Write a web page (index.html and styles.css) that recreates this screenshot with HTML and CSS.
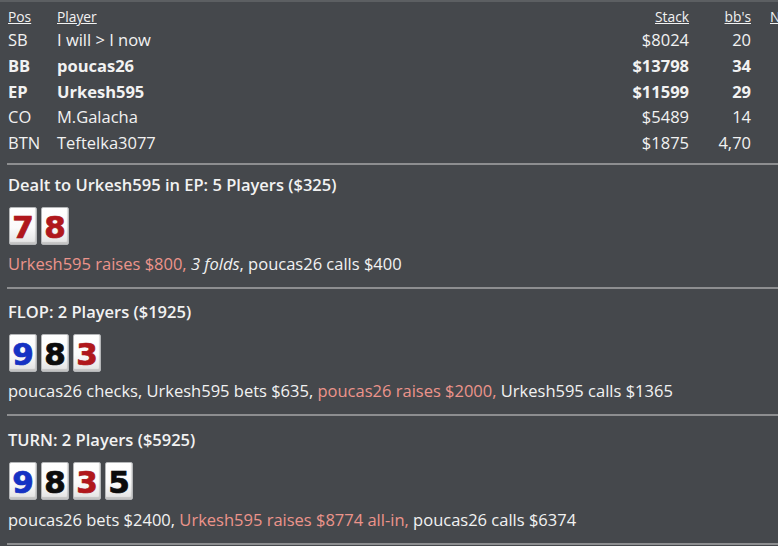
FILE: index.html
```html
<!DOCTYPE html>
<html lang="en">
<head>
<meta charset="utf-8">
<title>Hand history</title>
<link rel="stylesheet" href="styles.css">
</head>
<body>
<div class="page">
  <div class="players">
    <div class="cell head"><a href="#">Pos</a></div>
    <div class="cell head"><a href="#">Player</a></div>
    <div class="cell head num"><a href="#">Stack</a></div>
    <div class="cell head num"><a href="#">bb's</a></div>
    <div class="cell head extra"><a href="#">N</a></div>

    <div class="cell">SB</div><div class="cell">I will &gt; I now</div><div class="cell num">$8024</div><div class="cell num">20</div><div class="cell"></div>
    <div class="cell hero">BB</div><div class="cell hero">poucas26</div><div class="cell num hero">$13798</div><div class="cell num hero">34</div><div class="cell"></div>
    <div class="cell hero">EP</div><div class="cell hero">Urkesh595</div><div class="cell num hero">$11599</div><div class="cell num hero">29</div><div class="cell"></div>
    <div class="cell">CO</div><div class="cell">M.Galacha</div><div class="cell num">$5489</div><div class="cell num">14</div><div class="cell"></div>
    <div class="cell">BTN</div><div class="cell">Teftelka3077</div><div class="cell num">$1875</div><div class="cell num">4,70</div><div class="cell"></div>
  </div>
  <hr class="sep sep-first">

  <section class="street street-first">
    <h2 class="title">Dealt to Urkesh595 in EP: 5 Players ($325)</h2>
    <div class="cards">
      <span class="card red">7</span><span class="card red">8</span>
    </div>
    <p class="actions"><span class="aggr">Urkesh595 raises $800, </span><em>3 folds</em>, poucas26 calls $400</p>
  </section>
  <hr class="sep">

  <section class="street">
    <h2 class="title">FLOP: 2 Players ($1925)</h2>
    <div class="cards">
      <span class="card blue">9</span><span class="card black">8</span><span class="card red">3</span>
    </div>
    <p class="actions">poucas26 checks, Urkesh595 bets $635, <span class="aggr">poucas26 raises $2000, </span>Urkesh595 calls $1365</p>
  </section>
  <hr class="sep">

  <section class="street street-last">
    <h2 class="title">TURN: 2 Players ($5925)</h2>
    <div class="cards">
      <span class="card blue">9</span><span class="card black">8</span><span class="card red">3</span><span class="card black">5</span>
    </div>
    <p class="actions">poucas26 bets $2400, <span class="aggr">Urkesh595 raises $8774 all-in, </span>poucas26 calls $6374</p>
  </section>
  <hr class="sep">
</div>
</body>
</html>
```

FILE: styles.css
```css
html, body {
  margin: 0;
  padding: 0;
  overflow: hidden;
  background: #45484c;
}

body {
  border-top: 2px solid #5c5f62;
  font-family: "Open Sans", "Noto Sans", sans-serif;
  color: #f2f2f2;
  font-size: 16.5px;
}

.page {
  padding-left: 7px;
}

.players {
  display: grid;
  grid-template-columns: 49px 512px 120px 62px 40px;
  column-gap: 0;
  width: 783px;
  margin-top: 4px;
  padding-left: 1px;
}

.cell {
  line-height: 25.75px;
  white-space: nowrap;
}

.cell.head {
  font-size: 13.8px;
  line-height: 21px;
}

.cell.head a {
  color: #f2f2f2;
  text-decoration: underline;
}

.cell.extra {
  padding-left: 19px;
}

.num {
  text-align: right;
}

.hero {
  font-weight: 700;
}

.sep {
  border: 0;
  height: 2px;
  background: #8d8e90;
  margin: 0;
}

.sep-first {
  margin-top: 7px;
}

.street {
  padding-left: 1px;
}

.title {
  margin: 12px 0 0;
  font-size: 16.5px;
  font-weight: 600;
  line-height: 22px;
}

.street-first .title {
  margin-top: 9px;
}

.street-last .title {
  margin-top: 13px;
}

.cards {
  display: flex;
  gap: 4px;
  margin: 11px 0 0 1px;
}

.card {
  box-sizing: border-box;
  width: 28px;
  height: 38px;
  border: 1px solid #b4b6b8;
  border-radius: 2px;
  background: linear-gradient(180deg, #ffffff 0%, #fbfbfb 55%, #e2e2e2 100%);
  box-shadow: inset -1px -2px 1px rgba(0, 0, 0, 0.14);
  display: flex;
  align-items: flex-end;
  justify-content: center;
  font-family: "DejaVu Sans", sans-serif;
  font-weight: 700;
  font-size: 31px;
  line-height: 32px;
  padding-bottom: 1px;
  -webkit-text-stroke: 0.7px currentColor;
  text-shadow: 0 0 1px rgba(0, 0, 0, 0.25);
}

.card.red { color: #b0171c; }
.card.blue { color: #1532c4; }
.card.black { color: #0c0c0c; }

.actions {
  margin: 8px 0 12px;
  line-height: 22px;
}

.street-last .actions {
  margin-top: 9px;
}

.aggr {
  color: #ec948b;
}

.actions em {
  font-style: italic;
}
```
